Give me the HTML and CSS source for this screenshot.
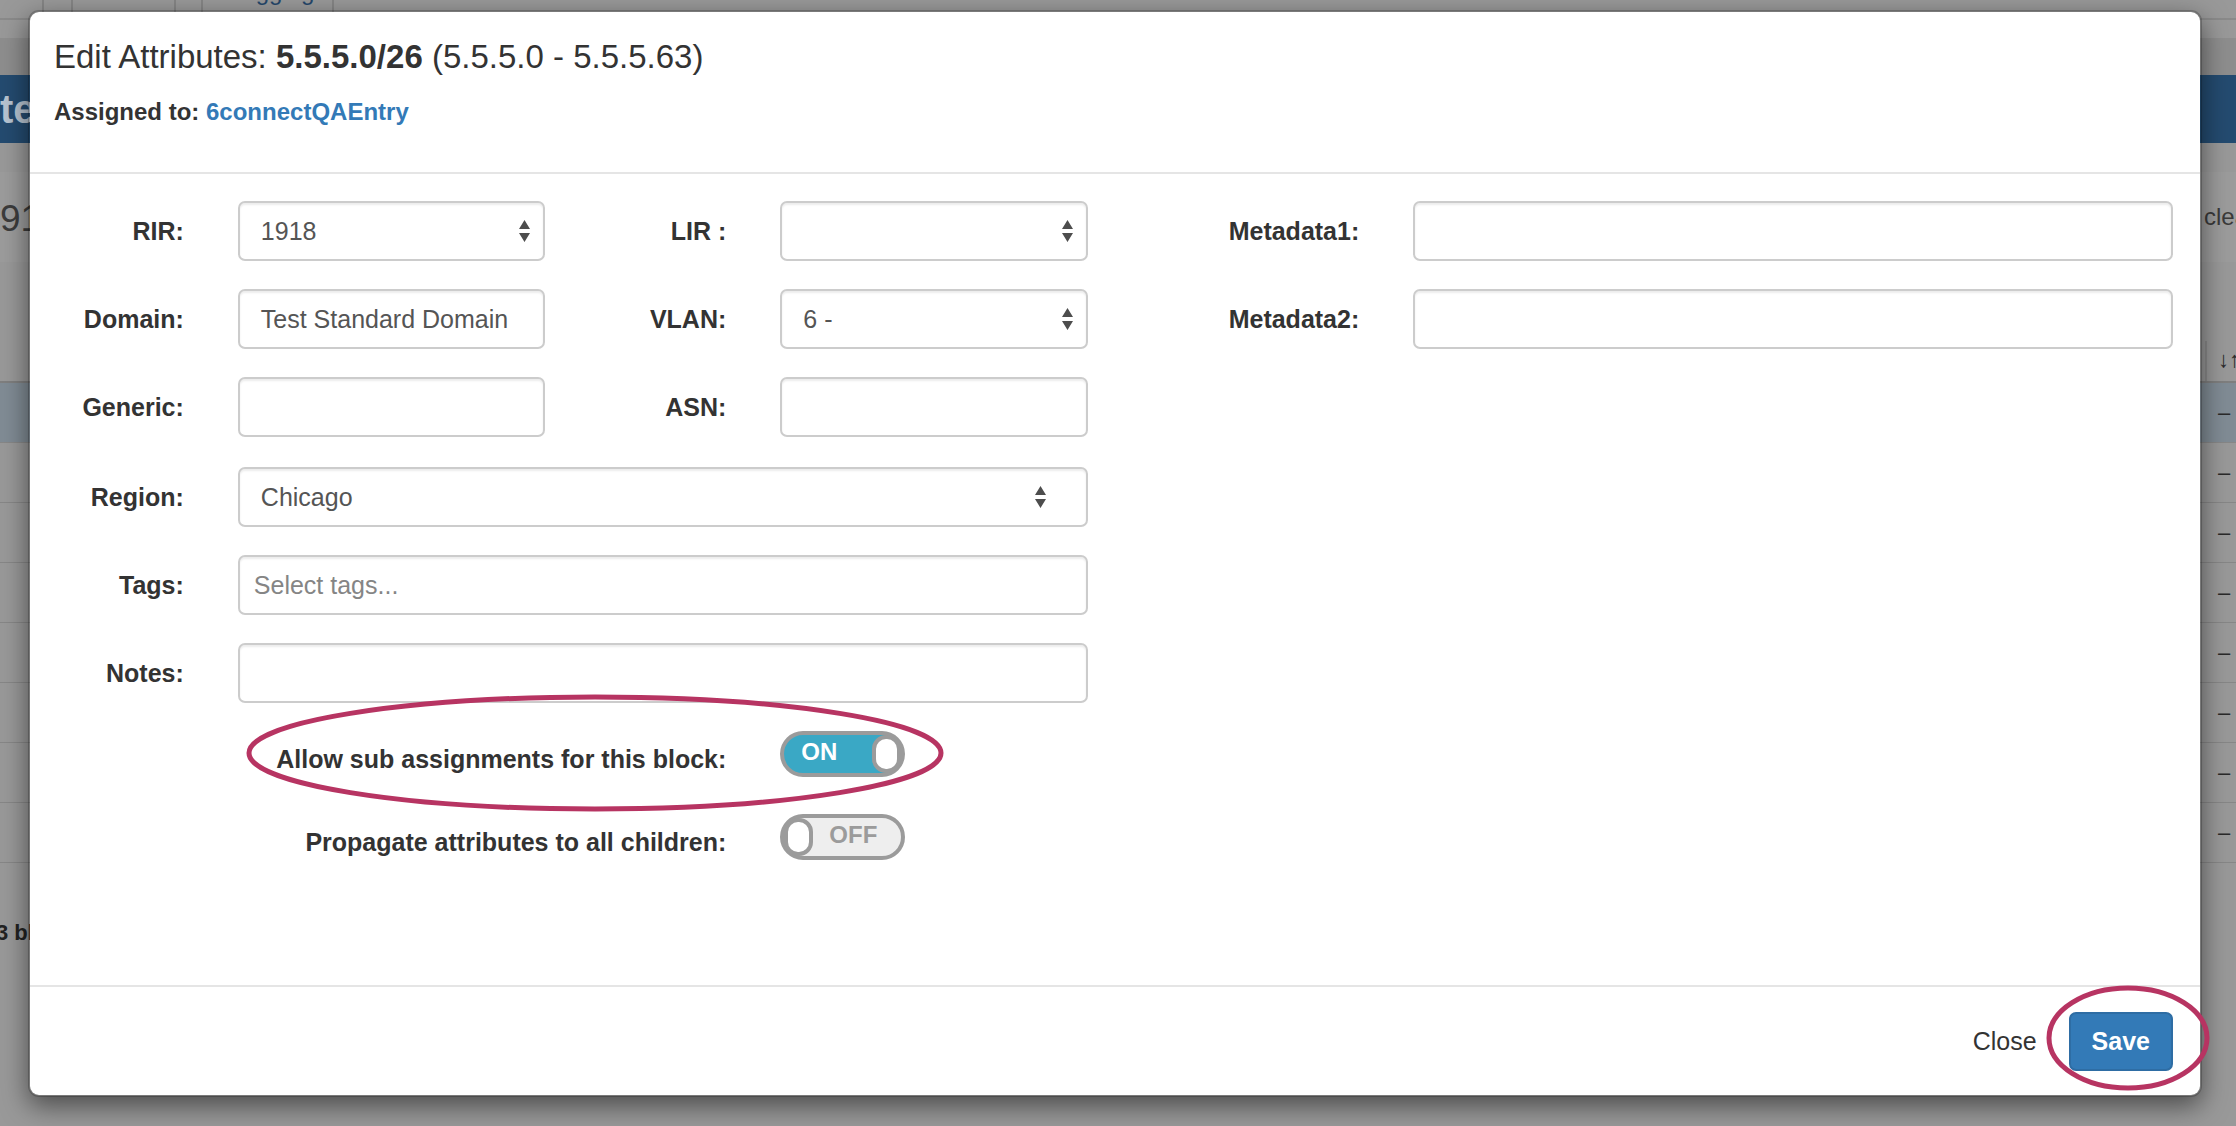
FILE: index.html
```html
<!DOCTYPE html>
<html lang="en">
<head>
    <meta charset="UTF-8">
    <meta name="viewport" content="width=device-width, initial-scale=1.0">
    <title>Edit Attributes</title>
    <link rel="stylesheet" href="styles.css">
</head>
<body>
    <div class="page">
        <div class="tabs">
            <span class="tab t1"></span>
            <span class="tab t2"></span>
            <span class="tab t3"></span>
            <span class="tab t4"></span>
            <span class="tab t5"><span class="tab-text">Logging</span></span>
        </div>
        <div class="subnav"></div>
        <div class="navbar"></div>
        <div class="titlebar">te</div>
        <div class="spacer"></div>
        <div class="toolbar">
            <span class="count">91</span>
            <span class="clear-link">clear</span>
        </div>
        <div class="grid-head">
            <span class="sort-cell">&#8595;&#8593;</span>
        </div>
        <div class="grid-row selected"><span class="dash">&ndash;</span></div>
        <div class="grid-row"><span class="dash">&ndash;</span></div>
        <div class="grid-row"><span class="dash">&ndash;</span></div>
        <div class="grid-row"><span class="dash">&ndash;</span></div>
        <div class="grid-row"><span class="dash">&ndash;</span></div>
        <div class="grid-row"><span class="dash">&ndash;</span></div>
        <div class="grid-row"><span class="dash">&ndash;</span></div>
        <div class="grid-row"><span class="dash">&ndash;</span></div>
        <div class="page-foot">3 blocks</div>
    </div>

    <div class="modal">
        <div class="modal-header">
            <h4 class="modal-title">Edit Attributes: <strong>5.5.5.0/26</strong> (5.5.5.0 - 5.5.5.63)</h4>
            <h5 class="assigned"><strong>Assigned to:</strong> <a href="#">6connectQAEntry</a></h5>
        </div>

        <div class="modal-body">
            <div class="form-cols">
                <div class="half">
                    <div class="form-row">
                        <label class="label w2">RIR:</label>
                        <div class="field w4">
                            <div class="control select">
                                <span>1918</span>
                                <svg class="arrows" width="11" height="22" viewBox="0 0 11 22"><path d="M5.5 0 L11 9 L0 9 Z M0 13 L11 13 L5.5 22 Z"/></svg>
                            </div>
                        </div>
                        <label class="label w2">LIR :</label>
                        <div class="field w4">
                            <div class="control select">
                                <span></span>
                                <svg class="arrows" width="11" height="22" viewBox="0 0 11 22"><path d="M5.5 0 L11 9 L0 9 Z M0 13 L11 13 L5.5 22 Z"/></svg>
                            </div>
                        </div>
                    </div>
                    <div class="form-row">
                        <label class="label w2">Domain:</label>
                        <div class="field w4"><div class="control">Test Standard Domain</div></div>
                        <label class="label w2">VLAN:</label>
                        <div class="field w4">
                            <div class="control select">
                                <span>6 -</span>
                                <svg class="arrows" width="11" height="22" viewBox="0 0 11 22"><path d="M5.5 0 L11 9 L0 9 Z M0 13 L11 13 L5.5 22 Z"/></svg>
                            </div>
                        </div>
                    </div>
                    <div class="form-row grid-end">
                        <label class="label w2">Generic:</label>
                        <div class="field w4"><div class="control"></div></div>
                        <label class="label w2">ASN:</label>
                        <div class="field w4"><div class="control"></div></div>
                    </div>
                    <div class="form-row">
                        <label class="label w2">Region:</label>
                        <div class="field w10">
                            <div class="control select-wide">
                                <span>Chicago</span>
                                <svg class="arrows" width="11" height="22" viewBox="0 0 11 22"><path d="M5.5 0 L11 9 L0 9 Z M0 13 L11 13 L5.5 22 Z"/></svg>
                            </div>
                        </div>
                    </div>
                    <div class="form-row">
                        <label class="label w2">Tags:</label>
                        <div class="field w10"><div class="control tags">Select tags...</div></div>
                    </div>
                    <div class="form-row">
                        <label class="label w2">Notes:</label>
                        <div class="field w10"><div class="control"></div></div>
                    </div>

                    <div class="switch-row">
                        <label class="label switch-label w8">Allow sub assignments for this block:</label>
                        <div class="field w4">
                            <div class="switch on">
                                <span class="switch-text">ON</span>
                                <span class="knob"></span>
                            </div>
                        </div>
                    </div>
                    <div class="switch-row last">
                        <label class="label switch-label w8">Propagate attributes to all children:</label>
                        <div class="field w4">
                            <div class="switch off">
                                <span class="knob"></span>
                                <span class="switch-text">OFF</span>
                            </div>
                        </div>
                    </div>
                </div>

                <div class="half">
                    <div class="form-row">
                        <label class="label w3">Metadata1:</label>
                        <div class="field w9"><div class="control"></div></div>
                    </div>
                    <div class="form-row">
                        <label class="label w3">Metadata2:</label>
                        <div class="field w9"><div class="control"></div></div>
                    </div>
                </div>
            </div>
        </div>

        <div class="modal-footer">
            <button class="btn btn-link">Close</button>
            <button class="btn btn-primary">Save</button>
        </div>
    </div>

    <svg class="marks" width="2236" height="1126" viewBox="0 0 2236 1126">
        <ellipse cx="595" cy="753" rx="346" ry="56"/>
        <ellipse cx="2128" cy="1038" rx="79" ry="50"/>
    </svg>
</body>
</html>
```

FILE: styles.css
```css
body {
    margin: 0;
    width: 2236px;
    height: 1126px;
    overflow: hidden;
    position: relative;
    background-color: #999999;
    font-family: "Liberation Sans", Arial, Helvetica, sans-serif;
    color: #333333;
}

/* page behind the backdrop (already dimmed) */
.page {
    height: 1126px;
    overflow: hidden;
    background-color: #999999;
}

.tabs {
    display: flex;
    height: 18px;
    border-bottom: 2px solid #8a8a8a;
}

.tab {
    height: 100%;
    border-right: 2px solid #858585;
}

.t1 { width: 42px; }
.t2 { width: 27px; }
.t3 { width: 101px; }
.t4 { width: 25px; }
.t5 { width: 129px; }

.tab-text {
    display: block;
    margin-top: -20px;
    padding-left: 26px;
    font-size: 24px;
    line-height: 24px;
    color: #25476b;
}

.subnav {
    height: 18px;
}

.navbar {
    height: 37px;
    background-color: #8e8e8e;
}

.titlebar {
    height: 68px;
    background-color: #244b70;
    color: #b7c4d1;
    font-size: 40px;
    font-weight: bold;
    line-height: 68px;
    white-space: nowrap;
}

.spacer {
    height: 29px;
}

.toolbar {
    display: flex;
    justify-content: space-between;
    height: 90px;
    background-color: #9c9c9c;
}

.count {
    padding-top: 28px;
    font-size: 37px;
    line-height: 37px;
    color: #3c3c3c;
}

.clear-link {
    padding-top: 33px;
    margin-right: -20px;
    font-size: 24px;
    line-height: 24px;
    color: #3a3a3a;
}

.grid-head {
    display: flex;
    justify-content: flex-end;
    align-items: flex-end;
    height: 119px;
    border-bottom: 2px solid #7f7f7f;
}

.sort-cell {
    width: 18px;
    height: 40px;
    padding-left: 11px;
    border-left: 2px solid #8a8a8a;
    font-size: 22px;
    font-weight: bold;
    line-height: 38px;
    color: #2b2b2b;
    white-space: nowrap;
}

.grid-row {
    display: flex;
    justify-content: flex-end;
    align-items: center;
    height: 59px;
    border-bottom: 1px solid #878787;
}

.grid-row.selected {
    background-color: #818c95;
}

.dash {
    width: 18px;
    font-size: 22px;
    color: #2a2a2a;
}

.page-foot {
    margin-top: 57px;
    margin-left: -4px;
    font-size: 22px;
    font-weight: bold;
    line-height: 26px;
    color: #222222;
    white-space: nowrap;
}

/* modal */
.modal {
    position: absolute;
    top: 10px;
    left: 28px;
    width: 2174px;
    box-sizing: border-box;
    background-color: #ffffff;
    background-clip: padding-box;
    border: 2px solid rgba(0, 0, 0, 0.2);
    border-radius: 11px;
    box-shadow: 0 9px 27px rgba(0, 0, 0, 0.5);
}

.modal-header {
    padding: 23px 27px 43px 24px;
    border-bottom: 2px solid #e5e5e5;
}

.modal-title {
    margin: 0;
    font-size: 33px;
    font-weight: normal;
    line-height: 44px;
    color: #333333;
}

.assigned {
    margin: 16px 0 0;
    font-size: 24px;
    font-weight: normal;
    line-height: 34px;
}

.assigned a {
    color: #337ab7;
    font-weight: bold;
    text-decoration: none;
}

.modal-body {
    padding: 27px 0;
}

.form-cols {
    display: flex;
}

.half {
    width: 50%;
}

.form-row {
    display: flex;
    margin-bottom: 28px;
}

.form-row.grid-end {
    margin-bottom: 30px;
}

.label {
    box-sizing: border-box;
    padding: 0 27px;
    text-align: right;
    font-size: 25px;
    font-weight: bold;
    line-height: 60px;
    color: #333333;
    white-space: nowrap;
}

.field {
    box-sizing: border-box;
    padding: 0 27px;
}

.w2 { width: 16.6667%; }
.w3 { width: 25%; }
.w4 { width: 33.3333%; }
.w8 { width: 66.6667%; }
.w9 { width: 75%; }
.w10 { width: 83.3333%; }

.control {
    display: flex;
    justify-content: space-between;
    align-items: center;
    box-sizing: border-box;
    height: 60px;
    padding: 0 21px;
    background-color: #ffffff;
    border: 2px solid #cccccc;
    border-radius: 7px;
    box-shadow: inset 0 2px 2px rgba(0, 0, 0, 0.075);
    font-size: 25px;
    color: #555555;
}

.control.select {
    padding-right: 13px;
}

.control.select-wide {
    padding-right: 40px;
}

.control.tags {
    padding-left: 14px;
    color: #858585;
}

.arrows {
    fill: #4d4d4d;
}

.switch-row {
    display: flex;
    margin-bottom: 37px;
}

.switch-row.last {
    margin-bottom: 98px;
}

.switch-label {
    padding-top: 10px;
    line-height: 36px;
}

.switch {
    display: flex;
    align-items: center;
    box-sizing: border-box;
    width: 125px;
    height: 46px;
    border: 4px solid #9b9b9b;
    border-radius: 23px;
}

.switch.on {
    background-color: #3aa8c5;
}

.switch.off {
    background-color: #eeeeee;
}

.switch-text {
    margin-left: 17px;
    padding-bottom: 4px;
    font-size: 24px;
    font-weight: bold;
    line-height: 24px;
}

.on .switch-text {
    color: #ffffff;
}

.off .switch-text {
    margin-left: 16px;
    color: #9b9b9b;
}

.knob {
    box-sizing: border-box;
    width: 29px;
    height: 38px;
    background-color: #ffffff;
    border: 4px solid #9b9b9b;
    border-radius: 14px;
}

.on .knob {
    margin-left: auto;
}

.modal-footer {
    display: flex;
    justify-content: flex-end;
    align-items: center;
    padding: 25px 27px 24px;
    border-top: 2px solid #e5e5e5;
}

.btn {
    height: 59px;
    padding: 0 21px;
    border: 2px solid transparent;
    border-radius: 7px;
    font-family: inherit;
    font-size: 25px;
    cursor: pointer;
}

.btn-link {
    margin-right: 9px;
    background: none;
    color: #333333;
}

.btn-primary {
    background-color: #337ab7;
    border-color: #2e6da4;
    color: #ffffff;
    font-weight: bold;
}

/* annotation marks drawn over the screenshot */
.marks {
    position: absolute;
    top: 0;
    left: 0;
    pointer-events: none;
}

.marks ellipse {
    fill: none;
    stroke: #b73462;
    stroke-width: 5;
}
```
